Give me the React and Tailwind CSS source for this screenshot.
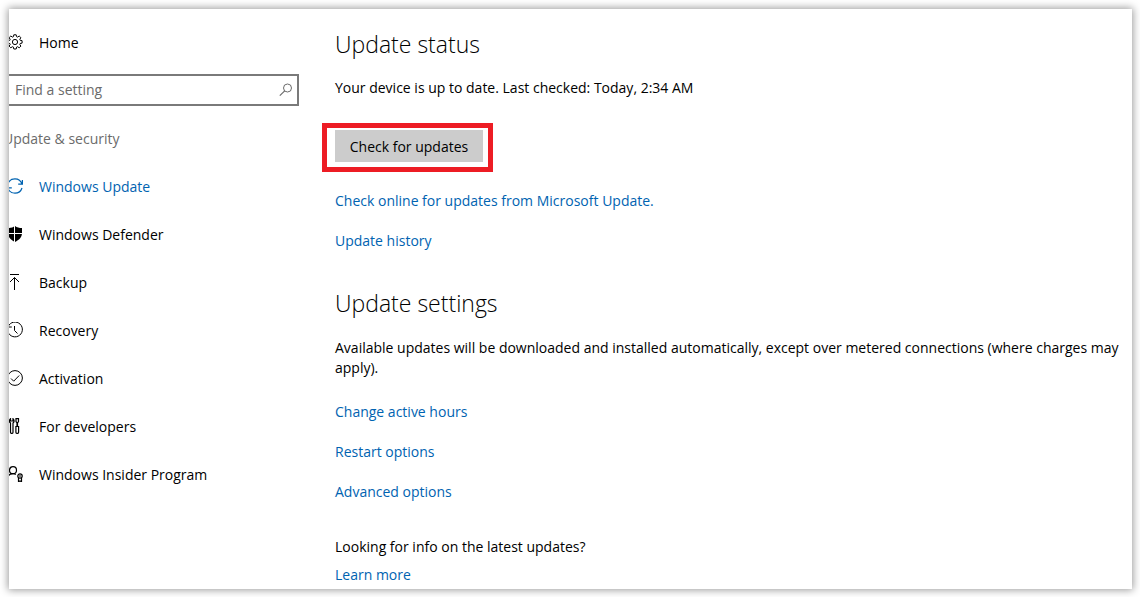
function Icon({ children }) {
  return (
    <svg
      viewBox="0 0 16 16"
      className="mb-0.5 size-4 shrink-0"
      fill="none"
      stroke="currentColor"
      strokeWidth="1"
      aria-hidden="true"
    >
      {children}
    </svg>
  );
}

function GearIcon() {
  return (
    <Icon>
      <path d="M6.800.800h2.400l.4 1.900 1 .4 1.600-1.100 1.700 1.700-1.100 1.600.4 1 1.900.4v2.400l-1.900.4-.4 1 1.100 1.600-1.700 1.700-1.600-1.100-1 .4-.4 1.900H6.800l-.4-1.900-1-.4-1.600 1.100-1.700-1.700 1.100-1.600-.4-1-1.900-.4V6.700l1.900-.4.4-1-1.100-1.600 1.700-1.700 1.600 1.100 1-.4z" />
      <circle cx="8" cy="8" r="2.600" />
    </Icon>
  );
}

function SyncIcon() {
  return (
    <Icon>
      <path
        d="M.900 6A7.400 7.400 0 0 1 15 6M15.400 2v4.200h-4.200M15 10A7.400 7.400 0 0 1 .9 10M.6 14V9.800h4.200"
        strokeWidth="1.200"
      />
    </Icon>
  );
}

function ShieldIcon() {
  return (
    <Icon>
      <path
        d="M8 0C6 1.500 3.800 2 1 2v5c0 4.400 3 7 7 9 4-2 7-4.600 7-9V2C12.200 2 10 1.500 8 0z"
        fill="currentColor"
        stroke="none"
      />
      <path d="M7.500 0v16M1 7.500h14" stroke="white" />
    </Icon>
  );
}

function BackupIcon() {
  return (
    <Icon>
      <path d="M3 .500h9M7.500 16V3.500M3 8l4.500-4.500L12 8" />
    </Icon>
  );
}

function RecoveryIcon() {
  return (
    <Icon>
      <path d="M1.200 4.500A7.400 7.400 0 1 1 .6 8M.8 1v4h4M7.500 4v4.500l3 3" />
    </Icon>
  );
}

function ActivationIcon() {
  return (
    <Icon>
      <circle cx="8" cy="8" r="7.400" />
      <path d="m4 8.500 2.700 2.700L12.200 5.500" />
    </Icon>
  );
}

function ToolsIcon() {
  return (
    <Icon>
      <path
        d="M3.500.700C2 2 2 4 3.500 5v9.300c0 1.500 2.500 1.500 2.500 0V5c1.500-1 1.500-3 0-4.300V3H3.500zM9 .700v2.800L10 5v3.500H8.900v5.800c0 1.500 2.700 1.500 2.700 0V8.500H10.500V5l1-1.500V.700z"
        strokeWidth="1.200"
      />
    </Icon>
  );
}

function InsiderIcon() {
  return (
    <Icon>
      <g strokeWidth="1.200">
        <circle cx="6" cy="4.200" r="3.500" />
        <path d="M.8 11.500C1.200 9 3 7.700 6 7.700c1.200 0 2 .2 2.800.7" />
        <circle cx="13" cy="10" r="2.200" />
        <path d="M11.500 12v3.700l1.500-.8 1.500.8V12M12 10h2" />
      </g>
    </Icon>
  );
}

const navItems = [
  { label: "Windows Update", icon: SyncIcon, active: true },
  { label: "Windows Defender", icon: ShieldIcon },
  { label: "Backup", icon: BackupIcon },
  { label: "Recovery", icon: RecoveryIcon },
  { label: "Activation", icon: ActivationIcon },
  { label: "For developers", icon: ToolsIcon },
  { label: "Windows Insider Program", icon: InsiderIcon },
];

function NavLink({ label, icon: ItemIcon, active }) {
  return (
    <a
      href="#"
      aria-current={active ? "page" : undefined}
      className={`flex h-12 items-center gap-4 ${active ? "text-[#0063b1]" : "text-black"}`}
    >
      <ItemIcon />
      {label}
    </a>
  );
}

function Sidebar() {
  return (
    <nav className="-ml-0.5 w-[328px] shrink-0 pt-2.5">
      <NavLink label="Home" icon={GearIcon} />
      <div className="flex h-12 items-center pb-0.5">
        <label className="-ml-1 flex h-8 w-[296px] items-center border-2 border-[#7a7a7a] pr-1 pl-2.5">
          <input
            type="text"
            aria-label="Find a setting"
            placeholder="Find a setting"
            className="min-w-0 flex-1 outline-none placeholder:text-[#6b6b6b]"
          />
          <svg
            viewBox="0 0 14 14"
            className="size-3.5 text-[#6b6b6b]"
            fill="none"
            stroke="currentColor"
            aria-hidden="true"
          >
            <circle cx="8.500" cy="5" r="4" />
            <path d="M5.700 7.800.8 12.700" strokeWidth="1.200" />
          </svg>
        </label>
      </div>
      <h1 className="-ml-1 flex h-12 items-center text-[#6b6b6b]">
        Update &amp; security
      </h1>
      {navItems.map((item) => (
        <NavLink key={item.label} {...item} />
      ))}
    </nav>
  );
}

function TextLink({ children }) {
  return (
    <a href="#" className="text-[#0063b1] hover:text-gray-500">
      {children}
    </a>
  );
}

function App() {
  return (
    <div className="flex min-h-screen bg-white p-2 pt-[9px] pl-[9px] font-['Open_Sans',sans-serif] text-sm leading-5 text-black">
      <div className="flex flex-1 overflow-hidden bg-white shadow-[0_0_8px_1px_rgba(0,0,0,0.4)]">
        <Sidebar />
        <main className="min-w-0 flex-1 pt-[19px] pb-1">
          <section className="flex flex-col items-start">
            <h2 className="text-[23px] leading-8 font-light">Update status</h2>
            <p className="mt-[18px]">
              Your device is up to date. Last checked: Today, 2:34 AM
            </p>
            <div className="mt-[25px] -ml-[13px] border-5 border-[#ed1c24] pt-0.5 pr-[5px] pb-[5px] pl-2">
              <button
                type="button"
                className="h-8 w-[148px] bg-[#cccccc] pt-0.5"
              >
                Check for updates
              </button>
            </div>
            <div className="mt-[19px] flex flex-col items-start gap-5">
              <TextLink>Check online for updates from Microsoft Update.</TextLink>
              <TextLink>Update history</TextLink>
            </div>
          </section>

          <section className="mt-9">
            <h2 className="text-[23px] leading-8 font-light">
              Update settings
            </h2>
            <p className="mt-[19px]">
              Available updates will be downloaded and installed automatically,
              except over metered connections (where charges may apply).
            </p>
            <div className="mt-6 flex flex-col items-start gap-5">
              <TextLink>Change active hours</TextLink>
              <TextLink>Restart options</TextLink>
              <TextLink>Advanced options</TextLink>
            </div>
          </section>

          <section className="mt-[35px] flex flex-col items-start gap-2">
            <p>Looking for info on the latest updates?</p>
            <TextLink>Learn more</TextLink>
          </section>
        </main>
      </div>
    </div>
  );
}

export default App;
